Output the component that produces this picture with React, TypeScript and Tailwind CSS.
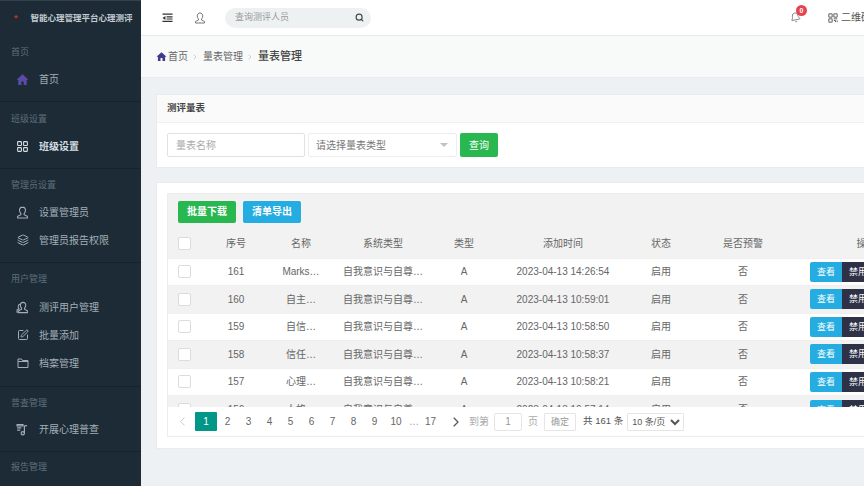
import React from 'react';
import { ChevronLeft, ChevronRight, Bell, Layers, LayoutGrid, Search, SquarePen } from 'lucide-react';

type IconProps = { className?: string };

const HomeIcon: React.FC<IconProps> = ({ className }) => (
  <svg viewBox="0 0 24 24" className={className} fill="currentColor">
    <path d="M12 2.5 1 12.5h3.2V22h5.6v-6.5h4.4V22h5.6v-9.5H23z" />
  </svg>
);

const BustIcon: React.FC<IconProps> = ({ className }) => (
  <svg viewBox="0 0 24 24" className={className} fill="none" stroke="currentColor" strokeWidth="2">
    <path d="M12 2c-3.3 0-5.5 2.6-5.5 6 0 2.6 1 4.6 2.5 6v2l-6 3v3h18v-3l-6-3v-2c1.5-1.4 2.5-3.4 2.5-6 0-3.4-2.2-6-5.5-6z" />
  </svg>
);

const UsersIcon: React.FC<IconProps> = ({ className }) => (
  <svg viewBox="0 0 24 24" className={className} fill="none" stroke="currentColor" strokeWidth="2">
    <path d="M13 2.5c-3 0-5 2.4-5 5.5 0 2.2.9 4 2.2 5.2v2L5 18v3.5h16V18l-5.2-2.8v-2c1.3-1.2 2.2-3 2.2-5.2 0-3.1-2-5.5-5-5.5z" />
    <path d="M8 5.5C5.5 6 4 8 4 10.5c0 1.7.6 3 1.6 4L2 16.5v4h3" />
  </svg>
);

const FolderIcon: React.FC<IconProps> = ({ className }) => (
  <svg viewBox="0 0 24 24" className={className} fill="none" stroke="currentColor" strokeWidth="2">
    <path d="M2 4h7l2 3h11v14H2z" />
    <path d="M2 9h20" />
  </svg>
);

const NoteIcon: React.FC<IconProps> = ({ className }) => (
  <svg viewBox="0 0 24 24" className={className} fill="none" stroke="currentColor" strokeWidth="2.2">
    <path d="M2 3h11v2.5H2zM2 9h8M2 13h6" />
    <path d="M15.5 5v14" />
    <path d="M15.5 5h5" />
    <circle cx="12.5" cy="19" r="3" />
  </svg>
);

const IndentIcon: React.FC<IconProps> = ({ className }) => (
  <svg viewBox="0 0 24 24" className={className} fill="currentColor">
    <path d="M1 3h22v3H1zM10 9.5h13V12H10zM10 14h13v2.500H10zM1 19h22v3H1z" />
    <path d="M7.500 8.500v9L1 13z" />
  </svg>
);

const QrIcon: React.FC<IconProps> = ({ className }) => (
  <svg viewBox="0 0 24 24" className={className} fill="none" stroke="currentColor" strokeWidth="2.2">
    <path d="M2 2h8v8H2zM14 2h8v8h-8zM2 14h8v8H2z" />
    <path d="M14 14h8M14 18h4v4M22 18v4" />
  </svg>
);

type MenuItem = { label: string; icon: React.ReactNode; active?: boolean };
type MenuSection = { title: string; items: MenuItem[]; pad: string; gap: string };

const menu: MenuSection[] = [
  { title: '首页', pad: 'pt-[8px] pb-[8px]', gap: 'mb-[5px]', items: [{ label: '首页', icon: <HomeIcon className="w-[13px] h-[13px] text-[#5b4ba8]" /> }] },
  { title: '班级设置', pad: 'pt-[9px] pb-[8px]', gap: 'mb-[5px]', items: [{ label: '班级设置', active: true, icon: <LayoutGrid className="w-[13px] h-[13px]" strokeWidth={2} /> }] },
  {
    title: '管理员设置',
    pad: 'pt-[8px] pb-[8px]',
    gap: 'mb-[5px]',
    items: [
      { label: '设置管理员', icon: <BustIcon className="w-[13px] h-[13px]" /> },
      { label: '管理员报告权限', icon: <Layers className="w-[12px] h-[12px]" strokeWidth={2} /> },
    ],
  },
  {
    title: '用户管理',
    pad: 'pt-[8px] pb-[9px]',
    gap: 'mb-[6px]',
    items: [
      { label: '测评用户管理', icon: <UsersIcon className="w-[13px] h-[13px]" /> },
      { label: '批量添加', icon: <SquarePen className="w-[12px] h-[12px]" strokeWidth={2} /> },
      { label: '档案管理', icon: <FolderIcon className="w-[12px] h-[12px]" /> },
    ],
  },
  { title: '普查管理', pad: 'pt-[8px] pb-[8px]', gap: 'mb-[4px]', items: [{ label: '开展心理普查', icon: <NoteIcon className="w-[13px] h-[13px]" /> }] },
  { title: '报告管理', pad: 'pt-[7px] pb-[8px]', gap: 'mb-[5px]', items: [] },
];

const rows = [
  { id: 161, name: 'Marks…', time: '2023-04-13 14:26:54' },
  { id: 160, name: '自主…', time: '2023-04-13 10:59:01' },
  { id: 159, name: '自信…', time: '2023-04-13 10:58:50' },
  { id: 158, name: '信任…', time: '2023-04-13 10:58:37' },
  { id: 157, name: '心理…', time: '2023-04-13 10:58:21' },
  { id: 156, name: '人格…', time: '2023-04-13 10:57:14' },
];

const Check = () => <span className="block w-[13px] h-[13px] bg-white border border-[#dcdcdc] rounded-[2px] ml-[10px]" />;

function Sidebar() {
  return (
    <aside className="w-[141px] shrink-0 h-full bg-[#1c2b36] overflow-hidden">
      <div className="h-[36px] flex items-center pl-[14px] gap-[13px] border-t border-[#33424d]">
        <span className="text-[#c9302c] text-[9px] leading-none font-bold">*</span>
        <span className="text-[8.5px] font-bold text-[#c3ccd2] whitespace-nowrap">智能心理管理平台心理测评</span>
      </div>
      {menu.map((s) => (
        <div key={s.title} className={`border-b border-[#17232c] last:border-b-0 ${s.pad}`}>
          <div className={`h-[16px] leading-[16px] pl-[11px] text-[9px] text-[#5f6f7b] ${s.gap}`}>{s.title}</div>
          {s.items.map((it) => (
            <div
              key={it.label}
              className={`h-[28px] flex items-center pl-[16px] gap-[10px] text-[10px] ${it.active ? 'text-[#d6dde2] font-semibold' : 'text-[#a3afb8]'}`}
            >
              <span className="w-[13px] flex justify-center shrink-0">{it.icon}</span>
              <span className="whitespace-nowrap">{it.label}</span>
            </div>
          ))}
        </div>
      ))}
    </aside>
  );
}

function Header() {
  return (
    <header className="h-[36px] shrink-0 bg-white border-b border-[#e7eaec] flex items-center text-[#555]">
      <IndentIcon className="w-[11px] h-[11px] ml-[21px] text-[#333]" />
      <BustIcon className="w-[12px] h-[12px] ml-[21px] text-[#777]" />
      <div className="ml-[19px] w-[146px] h-[20px] rounded-full bg-[#eef1f2] flex items-center pl-[10px] pr-[7px] justify-between">
        <span className="text-[9px] text-[#9a9a9a]">查询测评人员</span>
        <Search className="w-[9px] h-[9px] text-[#444]" strokeWidth={3} />
      </div>
      <div className="ml-auto relative">
        <Bell className="w-[11px] h-[11px] text-[#777] -rotate-12" strokeWidth={1.75} />
        <span className="absolute -top-[7px] left-[6px] w-[11px] h-[11px] rounded-full bg-[#e5434f] text-white text-[7px] font-bold leading-[11px] text-center">0</span>
      </div>
      <div className="ml-[27px] -mr-[5px] w-[41px] flex items-center gap-[3px] text-[10px] whitespace-nowrap overflow-hidden shrink-0">
        <QrIcon className="w-[10px] h-[10px] shrink-0" />
        <span>二维码</span>
      </div>
    </header>
  );
}

function Breadcrumb() {
  return (
    <div className="h-[42px] shrink-0 bg-[#f8f9f9] border-b border-[#e9ecee] flex items-center pl-[15px] text-[10px] text-[#666]">
      <HomeIcon className="w-[11px] h-[11px] text-[#3f3a8c]" />
      <span className="ml-[1px]">首页</span>
      <ChevronRight className="w-[8px] h-[8px] mx-[3px] text-[#bbb]" strokeWidth={2} />
      <span className="ml-[1px]">量表管理</span>
      <ChevronRight className="w-[8px] h-[8px] mx-[3px] text-[#bbb]" strokeWidth={2} />
      <span className="ml-[1px] text-[11px] font-medium text-[#444]">量表管理</span>
    </div>
  );
}

function FilterCard() {
  return (
    <section className="bg-white border border-[#e9ecee] w-[786px] shrink-0">
      <div className="h-[28px] bg-[#fafafa] border-b border-[#f0f0f0] flex items-center pl-[10px] text-[9.5px] font-semibold text-[#444]">测评量表</div>
      <div className="h-[44px] flex items-start pt-[10px] pl-[10px]">
        <div className="w-[138px] h-[24px] border border-[#e2e2e2] rounded-[2px] flex items-center pl-[8px] text-[10px] text-[#aaa]">量表名称</div>
        <div className="ml-[3px] w-[149px] h-[24px] border border-[#eeeeee] rounded-[2px] flex items-center justify-between pl-[7px] pr-[8px] text-[10px] text-[#777]">
          <span>请选择量表类型</span>
          <span className="w-0 h-0 border-l-[4px] border-r-[4px] border-t-[4px] border-l-transparent border-r-transparent border-t-[#c2c2c2]" />
        </div>
        <button className="ml-[3px] w-[38px] h-[24px] bg-[#28b84f] rounded-[2px] text-white text-[10px]">查询</button>
      </div>
    </section>
  );
}

function TablePanel() {
  const head = ['序号', '名称', '系统类型', '类型', '添加时间', '状态', '是否预警'];
  return (
    <section className="mt-[14px] bg-white border border-[#e9ecee] w-[786px] shrink-0 pt-[10px] pb-[11px] pl-[10px]">
      <div className="w-[775px] border border-[#ededed] border-r-0">
        <div className="h-[35px] bg-[#f2f2f2] flex items-center pl-[10px] gap-[7px] text-white text-[10px] font-semibold">
          <button className="w-[58px] h-[22px] bg-[#28b84f] rounded-[2px]">批量下载</button>
          <button className="w-[58px] h-[22px] bg-[#25ade2] rounded-[2px]">清单导出</button>
        </div>
        <div className="h-[178px] overflow-hidden">
          <table className="w-full table-fixed border-collapse text-[10px] text-[#666] text-center">
            <colgroup>
              <col className="w-[39px]" />
              <col className="w-[58px]" />
              <col className="w-[72px]" />
              <col className="w-[92px]" />
              <col className="w-[70px]" />
              <col className="w-[128px]" />
              <col className="w-[68px]" />
              <col className="w-[96px]" />
              <col />
            </colgroup>
            <thead>
              <tr className="h-[29px] bg-[#f2f2f2]">
                <th className="font-normal"><Check /></th>
                {head.map((h) => (
                  <th key={h} className="font-normal">{h}</th>
                ))}
                <th className="font-normal">操作</th>
              </tr>
            </thead>
            <tbody>
              {rows.map((r, i) => (
                <tr key={r.id} className={`h-[27.5px] border-t border-[#efefef] ${i % 2 === 1 ? 'bg-[#f2f2f2]' : 'bg-white'}`}>
                  <td><Check /></td>
                  <td>{r.id}</td>
                  <td>{r.name}</td>
                  <td>自我意识与自尊…</td>
                  <td>A</td>
                  <td>{r.time}</td>
                  <td>启用</td>
                  <td>否</td>
                  <td className="text-left pl-[19px]">
                    <span className="inline-flex h-[20px] text-white text-[9px] leading-[20px] align-middle">
                      <span className="w-[32px] bg-[#25ade2] text-center rounded-l-[2px]">查看</span>
                      <span className="w-[32px] bg-[#2f3247] text-center">禁用</span>
                    </span>
                  </td>
                </tr>
              ))}
            </tbody>
          </table>
        </div>
        <Pager />
      </div>
    </section>
  );
}

function Pager() {
  const pages = ['2', '3', '4', '5', '6', '7', '8', '9'];
  return (
    <div className="h-[29px] bg-white flex items-center text-[10px] text-[#666] whitespace-nowrap">
      <span className="w-[27px] flex justify-center pl-[2px]"><ChevronLeft className="w-[15px] h-[15px] text-[#c9c9c9]" strokeWidth={1.5} /></span>
      <span className="w-[22px] h-[19px] bg-[#009688] rounded-[1px] text-white text-center leading-[19px]">1</span>
      {pages.map((p) => (
        <span key={p} className="w-[21px] text-center">{p}</span>
      ))}
      <span className="w-[22px] text-center">10</span>
      <span className="w-[14px] text-center text-[#999]">…</span>
      <span className="w-[19px] text-center">17</span>
      <span className="ml-[7px] w-[18px] flex justify-center"><ChevronRight className="w-[16px] h-[16px] text-[#555]" strokeWidth={1.75} /></span>
      <span className="ml-[4px] text-[#aaa]">到第</span>
      <span className="ml-[5px] w-[28px] h-[18px] border border-[#e6e6e6] rounded-[2px] text-center leading-[16px] text-[#999]">1</span>
      <span className="ml-[6px] text-[#aaa]">页</span>
      <span className="ml-[6px] w-[32px] h-[18px] border border-[#e6e6e6] rounded-[1px] text-center leading-[16px] text-[9px] text-[#999]">确定</span>
      <span className="ml-[7px] text-[9.5px] text-[#555]">共 161 条</span>
      <select className="ml-[4px] w-[57px] h-[18px] border border-[#e6e6e6] rounded-[1px] bg-white text-[9px] text-[#555]" defaultValue="10">
        <option value="10">10 条/页</option>
      </select>
    </div>
  );
}

export default function App() {
  return (
    <div
      className="w-[864px] h-[486px] flex overflow-hidden bg-[#eef1f3]"
      style={{ fontFamily: '"Liberation Sans", "Noto Sans CJK SC", sans-serif' }}
    >
      <Sidebar />
      <main className="flex-1 min-w-0 h-full flex flex-col overflow-hidden">
        <Header />
        <Breadcrumb />
        <div className="pt-[16px] pl-[15px] flex flex-col overflow-hidden">
          <FilterCard />
          <TablePanel />
        </div>
      </main>
    </div>
  );
}
